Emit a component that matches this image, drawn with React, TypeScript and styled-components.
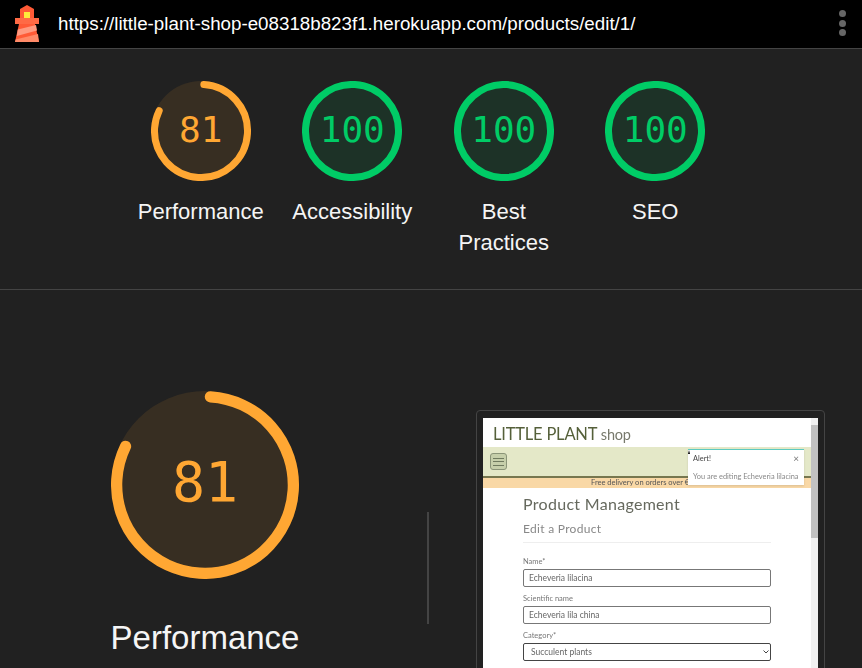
import styled, { createGlobalStyle } from 'styled-components'

const ORANGE = '#ffa733'
const GREEN = '#00cc66'

const scores = [
  { title: 'Performance', value: 81, color: ORANGE },
  { title: 'Accessibility', value: 100, color: GREEN },
  { title: 'Best Practices', value: 100, color: GREEN },
  { title: 'SEO', value: 100, color: GREEN },
]

const Gauge = ({ value, color, size }: { value: number; color: string; size: number }) => {
  // the big gauge has a thinner ring relative to its size
  const stroke = size > 150 ? 6 : 7
  const r = 50 - stroke / 2
  const c = 2 * Math.PI * r
  const full = value === 100
  return (
    <svg width={size} height={size} viewBox="0 0 100 100">
      <circle cx="50" cy="50" r="50" fill={color} opacity="0.1" />
      <circle
        cx="50"
        cy="50"
        r={r}
        fill="none"
        stroke={color}
        strokeWidth={stroke}
        strokeLinecap="round"
        strokeDasharray={full ? undefined : `${c * 0.811} ${c}`}
        transform="rotate(-86.5 50 50)"
      />
    </svg>
  )
}

const App = () => {
  return (
    <>
      <GlobalStyle />
      <Page>
        <TopBar>
          <svg width="26" height="38" viewBox="0 0 26 38">
            <path d="M13 0 L20 4 V13 H6 V4 Z" fill="#ff5a36" />
            <rect x="10" y="7" width="6" height="6" fill="#ffeb3b" />
            <rect x="1" y="13" width="24" height="6" fill="#ff6a45" />
            <path d="M5 19 H21 L25 37 H1 Z" fill="#ff5a36" />
            <path d="M3.8 24.5 L22 20 L23 25.5 L2.8 31 Z" fill="#ff9a80" />
            <path d="M1.6 34.5 L24 29 L25 37 H1 Z" fill="#ff8a68" />
          </svg>
          <Url>https://little-plant-shop-e08318b823f1.herokuapp.com/products/edit/1/</Url>
          <Dots>
            <i />
            <i />
            <i />
          </Dots>
        </TopBar>

        <ScoreRow>
          {scores.map((s) => (
            <ScoreItem key={s.title}>
              <GaugeWrap>
                <Gauge value={s.value} color={s.color} size={100} />
                <ScoreNumber $color={s.color}>{s.value}</ScoreNumber>
              </GaugeWrap>
              <ScoreLabel>{s.title}</ScoreLabel>
            </ScoreItem>
          ))}
        </ScoreRow>

        <Detail>
          <BigScore>
            <BigGaugeWrap>
              <Gauge value={81} color={ORANGE} size={188} />
              <BigNumber>81</BigNumber>
            </BigGaugeWrap>
            <BigLabel>Performance</BigLabel>
          </BigScore>
          <VerticalRule />
          <ShotCard>
            <Shot>
              <ShotMain>
                <Logo>
                  LITTLE PLANT <small>shop</small>
                </Logo>
                <Nav>
                  <Burger>
                    <i />
                    <i />
                    <i />
                  </Burger>
                </Nav>
                <Banner>Free delivery on orders over €50</Banner>
                <Alert>
                  <AlertHead>
                    <span>Alert!</span>
                    <AlertClose>×</AlertClose>
                  </AlertHead>
                  <AlertBody>You are editing Echeveria lilacina</AlertBody>
                </Alert>
                <FormArea>
                  <PageTitle>Product Management</PageTitle>
                  <SubTitle>Edit a Product</SubTitle>
                  <FieldLabel>Name*</FieldLabel>
                  <Field>Echeveria lilacina</Field>
                  <FieldLabel>Scientific name</FieldLabel>
                  <Field>Echeveria lila china</Field>
                  <FieldLabel>Category*</FieldLabel>
                  <SelectField>
                    <span>Succulent plants</span>
                    <svg width="6" height="4" viewBox="0 0 6 4">
                      <path d="M0.5 0.5 L3 3 L5.5 0.5" fill="none" stroke="#444" strokeWidth="1" />
                    </svg>
                  </SelectField>
                  <FieldLabel>Description</FieldLabel>
                </FormArea>
              </ShotMain>
              <Scrollbar>
                <Thumb />
              </Scrollbar>
            </Shot>
          </ShotCard>
        </Detail>
      </Page>
    </>
  )
}
export default App

const GlobalStyle = createGlobalStyle`
  html, body {
    margin: 0;
    padding: 0;
    background: #212121;
    overflow: hidden;
  }
`

const Page = styled.div`
  width: 862px;
  height: 668px;
  overflow: hidden;
  background: #212121;
  color: #f5f5f5;
  font-family: 'Liberation Sans', Arial, sans-serif;
`

const TopBar = styled.div`
  height: 48px;
  background: #000;
  border-bottom: 1px solid #444;
  display: flex;
  align-items: center;
  padding: 0 16px 0 14px;
`

const Url = styled.div`
  margin-left: 18px;
  flex: 1;
  font-size: 18.75px;
  color: #fff;
  white-space: nowrap;
`

const Dots = styled.div`
  display: flex;
  flex-direction: column;
  gap: 2.5px;
  margin-bottom: 2px;

  i {
    display: block;
    width: 7px;
    height: 7px;
    border-radius: 50%;
    background: #666;
  }
`

const ScoreRow = styled.section`
  height: 241px;
  border-bottom: 1px solid #444;
  display: flex;
  justify-content: center;
  padding: 32px 6px 0 0;
  box-sizing: border-box;
`

const ScoreItem = styled.div`
  width: 151.5px;
  display: flex;
  flex-direction: column;
  align-items: center;
`

const GaugeWrap = styled.div`
  position: relative;
  width: 100px;
  height: 100px;
`

const ScoreNumber = styled.div<{ $color: string }>`
  position: absolute;
  inset: 0 0 3px 0;
  display: flex;
  align-items: center;
  justify-content: center;
  font-family: 'DejaVu Sans Mono', monospace;
  font-size: 36px;
  color: ${(p) => p.$color};
`

const ScoreLabel = styled.div`
  margin-top: 15px;
  width: 130px;
  text-align: center;
  font-size: 22px;
  line-height: 31px;
  color: #f5f5f5;
`

const Detail = styled.section`
  display: flex;
  align-items: flex-start;
`

const BigScore = styled.div`
  width: 410px;
  padding-top: 101px;
  display: flex;
  flex-direction: column;
  align-items: center;
`

const BigGaugeWrap = styled.div`
  position: relative;
  width: 188px;
  height: 188px;
`

const BigNumber = styled.div`
  position: absolute;
  inset: 0 0 6px 0;
  display: flex;
  align-items: center;
  justify-content: center;
  font-family: 'DejaVu Sans Mono', monospace;
  font-size: 55px;
  color: ${ORANGE};
`

const BigLabel = styled.div`
  margin-top: 40px;
  font-size: 33px;
  line-height: 38px;
  color: #f5f5f5;
`

const VerticalRule = styled.div`
  width: 2px;
  height: 112px;
  margin: 222px 0 0 17px;
  background: #444;
`

const ShotCard = styled.div`
  margin: 120px 0 0 47px;
  width: 349px;
  height: 300px;
  box-sizing: border-box;
  border: 1px solid #444;
  border-radius: 4px;
  padding: 7px 6px 0 6px;
`

const Shot = styled.div`
  height: 100%;
  background: #fff;
  display: flex;
  filter: blur(0.35px);
  font-family: 'Lato', sans-serif;
`

const ShotMain = styled.div`
  position: relative;
  flex: 1;
  min-width: 0;
  overflow: hidden;
`

const Logo = styled.div`
  height: 29px;
  padding: 8px 0 0 10px;
  box-sizing: border-box;
  font-size: 16.5px;
  line-height: 17px;
  letter-spacing: -0.2px;
  color: #55603a;

  small {
    font-size: 14.5px;
    color: #77796c;
  }
`

const Nav = styled.div`
  height: 29px;
  background: #e4e8c8;
  border-bottom: 2px solid #77774f;
  display: flex;
  align-items: center;
  padding-left: 7px;
`

const Burger = styled.div`
  width: 17px;
  height: 17px;
  box-sizing: border-box;
  background: #c6cfaa;
  border: 1px solid #8b9578;
  border-radius: 3px;
  display: flex;
  flex-direction: column;
  justify-content: center;
  gap: 2.5px;
  padding: 0 2px;

  i {
    display: block;
    height: 1px;
    background: #6f7a5e;
  }
`

const Banner = styled.div`
  height: 10px;
  background: #f9d8a6;
  font-size: 7.5px;
  line-height: 10px;
  padding-left: 108px;
  color: #555;
  white-space: nowrap;
`

const Alert = styled.div`
  position: absolute;
  top: 31px;
  left: 205px;
  width: 116px;
  height: 36px;
  box-sizing: border-box;
  background: #fff;
  border-top: 1px solid #5ccbc0;
  box-shadow: 0 1px 2px rgba(0, 0, 0, 0.12);
  padding: 4px 5px;
  font-size: 7.4px;
  color: #555;

  &::before {
    content: '';
    position: absolute;
    top: 0;
    left: 0;
    border-left: 1.5px solid transparent;
    border-right: 1.5px solid transparent;
    border-bottom: 4px solid #000;
  }
`

const AlertHead = styled.div`
  display: flex;
  justify-content: space-between;
  align-items: center;
  color: #444;
`

const AlertClose = styled.span`
  font-size: 10px;
  line-height: 9px;
  color: #777;
`

const AlertBody = styled.div`
  margin-top: 9px;
  color: #888;
  white-space: nowrap;
`

const FormArea = styled.div`
  padding: 6px 0 0 40px;
  width: 248px;
`

const PageTitle = styled.div`
  font-size: 16px;
  line-height: 20px;
  letter-spacing: 0.3px;
  color: #66695e;
  white-space: nowrap;
`

const SubTitle = styled.div`
  margin-top: 7px;
  padding-bottom: 6px;
  font-size: 12px;
  line-height: 15px;
  letter-spacing: 0.3px;
  color: #888;
  border-bottom: 1px solid #eee;
  margin-bottom: 14px;
`

const FieldLabel = styled.div`
  font-size: 7.5px;
  line-height: 9px;
  color: #777;
  margin-top: 3px;
  margin-bottom: 3px;
`

const Field = styled.div`
  height: 18px;
  margin-bottom: 7px;
  box-sizing: border-box;
  border: 1px solid #777;
  border-radius: 2px;
  padding-left: 5px;
  font-size: 8.5px;
  line-height: 16px;
  color: #666;
`

const SelectField = styled(Field)`
  display: flex;
  align-items: center;
  justify-content: space-between;
  border-color: #444;
  padding: 0 1px 0 7px;
`

const Scrollbar = styled.div`
  width: 7px;
  background: #f1f1f1;
  padding-top: 7px;
`

const Thumb = styled.div`
  height: 113px;
  background: #c1c1c1;
`
